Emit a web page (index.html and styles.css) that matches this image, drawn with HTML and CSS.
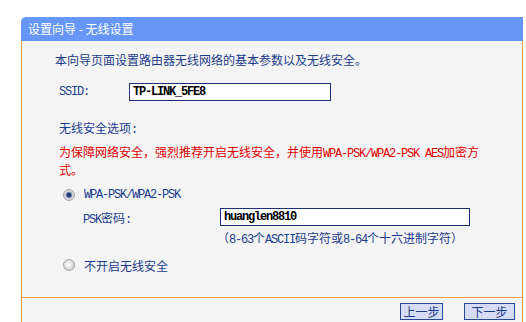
FILE: index.html
```html
<!DOCTYPE html>
<html lang="zh-CN">
<head>
<meta charset="utf-8">
<title>设置向导 - 无线设置</title>
<link rel="stylesheet" href="styles.css">
</head>
<body>
<div class="wrap">
  <div class="title">设置向导<span class="sp"> - </span>无线设置</div>
  <div class="panel">
    <div class="content">
      <p class="intro">本向导页面设置路由器无线网络的基本参数以及无线安全。</p>
      <div class="row ssid"><span class="label a">SSID:</span><input class="field f-ssid" type="text" value="TP-LINK_5FE8"></div>
      <p class="sec">无线安全选项<span class="a">:</span></p>
      <p class="warn">为保障网络安全，强烈推荐开启无线安全，并使用<span class="a">WPA-PSK/WPA2-PSK AES</span>加密方式。</p>
      <label class="radio-row r1"><input class="radio" type="radio" name="sec" checked><span class="a">WPA-PSK/WPA2-PSK</span></label>
      <div class="row psk"><span class="label2"><span class="a">PSK</span>密码<span class="a">:</span></span><input class="field f-psk" type="text" value="huanglen8810"></div>
      <p class="hint">（<span class="a">8-63</span>个<span class="a">ASCII</span>码字符或<span class="a">8-64</span>个十六进制字符）</p>
      <label class="radio-row r2"><input class="radio" type="radio" name="sec"><span>不开启无线安全</span></label>
    </div>
    <div class="footer">
      <button class="btn b1" type="button">上一步</button>
      <button class="btn b2" type="button">下一步</button>
    </div>
  </div>
</div>
</body>
</html>
```
FILE: styles.css
```css
html, body {
  margin: 0;
  padding: 0;
  background: #ffffff;
}
body {
  font-family: "Noto Sans CJK SC", "Liberation Sans", sans-serif;
  font-size: 12px;
  color: #1c3c8c;
}
.wrap {
  padding: 17px 3px 0 21px;
  width: 502px;
}
.title {
  height: 24px;
  line-height: 24px;
  background: #6596f8;
  color: #ffffff;
  padding-left: 7px;
  border-top-left-radius: 5px;
}
.title .sp {
  white-space: pre;
}
.panel {
  background: #f4f4f4;
  border-left: 1px solid #f0a04b;
  border-right: 1px solid #f0a04b;
}
.content {
  padding: 10px 0 23px 33px;
}
.content p {
  margin: 0;
}
.a {
  font-family: "Liberation Mono", "DejaVu Sans Mono", monospace;
  font-size: 12px;
  letter-spacing: -1.2px;
  line-height: 1;
}
.intro {
  height: 18px;
  line-height: 18px;
}
.row {
  display: flex;
  align-items: center;
  height: 18px;
  margin-left: 4px;
}
.ssid {
  margin-top: 14px;
}
.label {
  width: 70px;
}
.field {
  box-sizing: border-box;
  height: 18px;
  border: 1px solid #1c2f78;
  background: #ffffff;
  margin: 0;
  padding: 0 3px;
  font-family: "Liberation Mono", "DejaVu Sans Mono", monospace;
  font-size: 12px;
  letter-spacing: -1.2px;
  font-weight: bold;
  color: #000000;
  outline: none;
}
.f-ssid {
  width: 202px;
}
.f-psk {
  width: 250px;
}
.sec {
  margin: 18px 0 0 4px !important;
  height: 18px;
  line-height: 18px;
}
.warn {
  margin: 6px 0 0 4px !important;
  width: 425px;
  height: 36px;
  line-height: 18px;
  color: #e00000;
}
.radio-row {
  display: flex;
  align-items: center;
  height: 18px;
  margin-left: 4px;
}
.r1 {
  margin-top: 7px;
}
.r2 {
  margin-top: 9px;
}
.radio {
  appearance: none;
  -webkit-appearance: none;
  box-sizing: border-box;
  width: 12px;
  height: 12px;
  margin: 0 9px 0 4px;
  border-radius: 50%;
  border: 1px solid #a4a4a4;
  background: radial-gradient(circle at 45% 45%, #ffffff 0, #e8e8e8 3px, #cfcfcf 6px);
}
.radio:checked {
  background: radial-gradient(circle at 50% 50%, #16264e 0, #2f4f8f 2px, #9aa6c0 3px, #e2e2e2 4px, #c8c8c8 6px);
}
.psk {
  margin-top: 4px;
  padding-left: 24px;
}
.label2 {
  width: 137px;
}
.hint {
  margin: 3px 0 0 162px !important;
  height: 18px;
  line-height: 18px;
}
.footer {
  border-top: 1px solid #f0a04b;
  padding: 5px 7px 4px 0;
  display: flex;
  justify-content: flex-end;
  gap: 21px;
}
.btn {
  box-sizing: border-box;
  height: 17px;
  padding: 0;
  margin: 0;
  border: 1px solid #2a4898;
  background: #d6dcf6;
  color: #1c3c8c;
  font-family: "Noto Sans CJK SC", "Liberation Sans", sans-serif;
  font-size: 12px;
  line-height: 15px;
}
.b1 {
  width: 43px;
}
.b2 {
  width: 51px;
}
```
